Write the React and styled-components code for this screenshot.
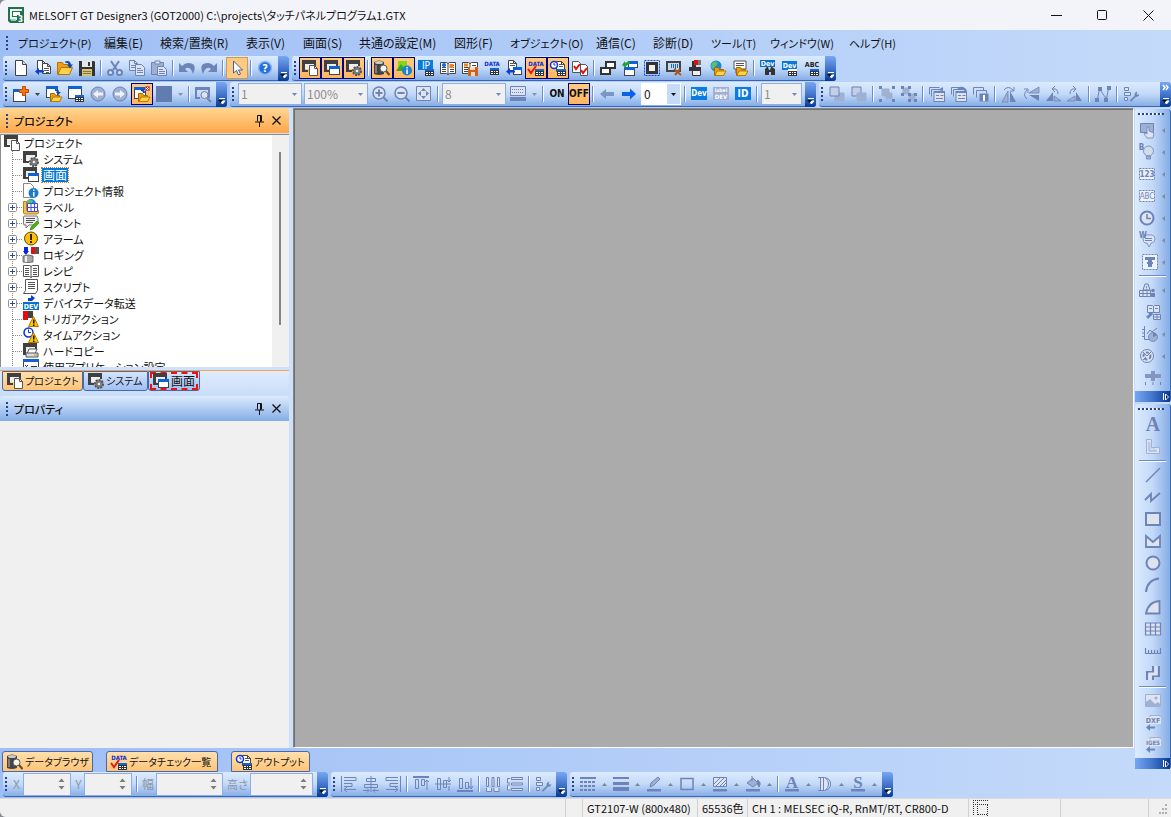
import React from 'react';
import styled, { createGlobalStyle, css } from 'styled-components';

const Global = createGlobalStyle`
  *, *::before, *::after { box-sizing: border-box; }
  html { background: #8a8a8a; }
  body { margin: 0; }
  body, button, input, select {
    font-family: "Noto Sans CJK JP", "Noto Sans", sans-serif;
    font-size: 12px;
    line-height: 16px;
    color: #111;
    font-feature-settings: "palt";
  }
  button { border: 0; padding: 0; background: none; }
`;

/* ---------- drawing helpers ---------- */

const D = '#6c84b7';
const M = '#9fb0d2';
const L = '#dde3ef';
const K = '#404040';

const T = ({ x = 8, y, s = 6, c = '#0b2bd0', w = 'bold', children }) => (
  <text x={x} y={y} fontSize={s} fontWeight={w} fill={c} textAnchor="middle" fontFamily="DejaVu Sans Condensed, sans-serif">{children}</text>
);
const Frame = () => (<><path d="M2 3h11v6H2z" fill="#eee" /><path d="M0 0h14v6h-2V4H3v6h3v2H0z" fill={K} /></>);
const Page = ({ x = 0, y = 0, c = '#444', f = '#fff' }) => (
  <path transform={`translate(${x} ${y})`} d="M.5.5h5l3 3v7h-8zM5.500.5v3h3" fill={f} stroke={c} />
);
const Lines = ({ d, c = '#555' }) => <path d={d} stroke={c} fill="none" />;
const Table = ({ x = 7, y = 9, h = '#1267d8', g = '#333' }) => (
  <g transform={`translate(${x} ${y})`}>
    <path d="M0 0h9v7H0z" fill={g} /><path d="M0 0h9v2H0z" fill={h} />
    <path d="M1 3h2v1H1zM4 3h1v1H4zM6 3h2v1H6zM1 5h2v1H1zM4 5h1v1H4zM6 5h2v1H6z" fill="#fff" />
  </g>
);
const Win = ({ x = 0, y = 0, w = 10, h = 8, c = '#1060d8', b = '#444' }) => (
  <g><rect x={x + 0.5} y={y + 0.5} width={w - 1} height={h - 1} fill="#fff" stroke={b} /><rect x={x} y={y} width={w} height="3" fill={c} /></g>
);
const Folder = ({ x = 4, y = 6 }) => (
  <g transform={`translate(${x} ${y})`}><path d="M.5 9.500V1.500h4l1 2h4v6z" fill="#e8a010" stroke="#a86a00" /><path d="M1 9.500l2-4.500h9l-2.500 4.500z" fill="#ffd34d" stroke="#b97b00" /></g>
);
const Gear = ({ x = 11, y = 11 }) => (
  <g transform={`translate(${x} ${y})`}><circle r="4" fill="#888" stroke="#555" strokeWidth="2" strokeDasharray="2 1" /><circle r="3" fill="#777" /><circle r="1.300" fill="#eee" /></g>
);
const Warn = ({ x = 5, y = 5 }) => (
  <g transform={`translate(${x} ${y})`}><path d="M5.500.5l5 10H.5z" fill="#ffc400" stroke="#b67a00" strokeLinejoin="round" /><path d="M5 3.500h1.500v4H5zM5 8.500h1.500V10H5z" fill="#111" /></g>
);
const Book = ({ c = '#444' }) => (
  <><path d="M.5 2.500h6l1.500 1 1.500-1h6v11h-6l-1.500 1-1.500-1h-6z" fill="#fff" stroke={c} /><path d="M8 3v12M2 5.500h4M2 7.500h4M2 9.500h4M2 11.500h4M10 5.500h4M10 7.500h4M10 9.500h4M10 11.500h4" stroke={c} /></>
);
const Globe = ({ x = 6, y = 6, r = 5.5 }) => (
  <g><circle cx={x} cy={y} r={r} fill="#1f86dc" /><path d={`M${x - 4} ${y - 3}q3-3 6 0l-2 3-3 3-2-2z`} fill="#56c271" /></g>
);
const ArrowL = ({ x = 0, y = 9, c = '#0a3fd8' }) => (
  <path transform={`translate(${x} ${y})`} d="M0 3.500L4 0v2.500h5v2H4V7z" fill={c} />
);
const Dash = ({ y = 2, h = 12 }) => <rect x=".5" y={y + 0.5} width="15" height={h - 1} fill="#eef2fa" stroke={D} strokeDasharray="2 1" />;
const Stack = () => (<><path d="M.5 8.500v-7h10M2.500 10.500v-7h10" fill="none" stroke={D} /><rect x="5" y="5.500" width="10.500" height="10" fill={L} stroke={D} /><path d="M5 6.500h10M7 9.500h3M7 12.500h7M11.500 9.500h3" stroke={D} /></>);
const Wrench = () => <path d="M7 14.500l5-5a2.500 2.500 0 0 1 2-3.500l-.5 2 1 1 1.500-.5a2.500 2.500 0 0 1-3 2L8 15.500z" fill={D} stroke={D} strokeWidth=".5" />;
const ListRows = () => <path d="M1.500 1.500h4v3h-4zM1.500 6.500h6v3h-6zM1.500 11.500h3v3h-3z" fill={L} stroke={D} />;
const Clock = ({ x, y, r, c }) => (<><circle cx={x} cy={y} r={r} fill="#fff" stroke={c} strokeWidth="1.500" /><path d={`M${x} ${y - r + 1.500}V${y}h${r - 2}`} stroke={c} fill="none" /></>);
const Log = () => (<><path d="M1 0h4v4H3L1 7zM0 4h6L3 8z" fill="#0828d8" /><path d="M8 0h4v7H8z" fill="#e01010" /><path d="M12 0h4v7h-4z" fill="#555" /></>);

const glyphs = {
  app: <><path d="M0 0h16v16H2l-2-2z" fill="#24714f" /><path d="M2 2h12v11H3l-1-1z" fill="#e6f5ee" /><path d="M4 4h10v6H4z" fill="#24714f" /><path d="M5 5h7v4H5z" fill="#fff" /><path d="M3 12h5v2H3z" fill="#9fcdb8" /><rect x="9" y="8" width="7" height="8" fill="#24714f" /><T x={12.500} y={15} s={8} c="#fff">3</T></>,
  newFile: <><path d="M2.500.5h7l4 4v11h-11z" fill="#fff" stroke={K} /><path d="M9.500.5v4h4" fill="#ddd" stroke={K} /></>,
  importFile: <><Page x={2} y={0} /><Page x={7} y={3} /><Lines d="M9 8.500h5M9 10.500h5M11 12.500h3" /><ArrowL x={0} y={8} /></>,
  openFile: <><path d="M.5 14.500v-12h5l1 2h6v3" fill="#eba21b" stroke="#b97300" /><path d="M1 14.500l3-7h11.500l-3 7z" fill="#ffd04a" stroke="#b97300" /><path d="M8 1.500q5-2 6 3h2l-3 4-3-4h2q-1-2-4-2z" fill="#1048b0" /></>,
  save: <><path d="M0 1h15l1 1v14H0z" fill="#333" /><path d="M3 1h10v6H3z" fill="#e6e6e6" /><path d="M9 2h2v4H9z" fill="#333" /><path d="M3 9h10v7H3z" fill="#d3c47a" /><path d="M4 11h8v1H4zM4 13h8v1H4z" fill="#847840" /></>,
  cut: <><path d="M4 1l6 9M12 1L6 10" stroke={D} strokeWidth="2" /><circle cx="3.500" cy="12.500" r="2.500" fill={L} stroke={D} strokeWidth="2" /><circle cx="12.500" cy="12.500" r="2.500" fill={L} stroke={D} strokeWidth="2" /></>,
  copy: <><Page x={0} y={0} c={D} f={L} /><Lines c={D} d="M2 5.500h4M2 7.500h4" /><g transform="translate(6 4)"><path d="M.5.5h6l3 3v8h-9z" fill={L} stroke={D} /><path d="M2 4.500h4M2 6.500h6M2 8.500h6" stroke={D} /></g></>,
  paste: <><path d="M.5 2.500h12v12H.5z" fill={M} stroke={D} /><path d="M4 1h5v3H4z" fill={L} stroke={D} /><path d="M6.500 6.500h6l3 3v6h-9z" fill={L} stroke={D} /><path d="M8 9.500h4M8 11.500h6M8 13.500h6" stroke={D} /></>,
  undo: <path d="M0 3v9h9L6 9q5-4 8 5 5-11-5-11-3 0-6 3z" fill={D} />,
  redo: <path d="M16 3v9H7l3-3Q5 5 2 14-3 3 7 3q3 0 6 3z" fill={D} />,
  cursor: <path d="M4.500 1v12l3-2.500 2 4.500 2-1-2-4h4z" fill="#fff" stroke="#4a5f99" />,
  help: <><circle cx="8" cy="8" r="6.500" fill="#2470dc" stroke="#8fb4ee" strokeWidth="1.500" /><T y={12} s={11} c="#fff">?</T></>,
  project: <><Frame /><g transform="translate(7 5)"><path d="M.5.5h5l3 3v7h-8z" fill="#fff" stroke="#555" /><path d="M5.500.5v3h3" fill="none" stroke="#555" /></g></>,
  screen: <><Frame /><Win x={5} y={6} w={11} h={9} /></>,
  system: <><Frame /><Gear /></>,
  dataBrowser: <><path d="M0 2q5-3 10 0v12q-5 2-10 0z" fill="#444" /><ellipse cx="5" cy="2.500" rx="4" ry="1.500" fill="#ccc" /><path d="M2 5v8" stroke="#bbb" /><circle cx="9.500" cy="8.500" r="3.500" fill="#f4f4f4" stroke="#555" /><path d="M12 11l3.500 4" stroke="#6b4a2a" strokeWidth="2" /></>,
  shapes: <><path d="M2 1h9v7H2z" fill="#83d61d" /><path d="M0 11l5-7 5 7z" fill="#3aa62a" /><circle cx="11" cy="10.500" r="5" fill="#1c82d0" /><path d="M10.300 7h1.500v1.500h-1.500zM10.300 9.500h1.500V14h-1.500z" fill="#fff" /></>,
  ip: <><path d="M0 0h15v10H0z" fill="#0a7bd8" /><T y={9} s={10} w="normal" c="#fff">IP</T><Table /></>,
  bookColor: <><Book /><circle cx="4" cy="5" r="2" fill="#1267e8" /><path d="M9.500 4h4v4h-4z" fill="#f08020" /></>,
  bookSave: <><Book /><path d="M2 3.500h4v3H2z" fill="#f08020" /><path d="M6 7h10v9H6z" fill="#d0601c" /><path d="M8 7h5v3H8zM9 12h4v4H9z" fill="#f7d9c0" /></>,
  data: <><T y={6}>DATA</T><Table x={6} y={8} /></>,
  dataCheck: <><T y={6}>DATA</T><path d="M0 9l3 4 5-7" stroke="#e01818" strokeWidth="2" fill="none" /><Table /></>,
  winImport: <><Page x={2} y={0} /><Lines d="M4 3.500h3M4 5.500h5" /><Win x={7} y={7} w={9} h={8} /><ArrowL x={0} y={8} /></>,
  output: <><Page x={6} y={1} /><Clock x={4} y={5} r={3.5} c="#0a35d8" /><path d="M9 4.500h4M9 6.500h4" stroke="#555" /><Table /></>,
  checkPages: <><path d="M.5 1.500h6l2 2v9h-8z" fill="#fff" stroke="#555" /><path d="M8.500 4.500h5l2 2v9h-7z" fill="#fff" stroke="#555" /><path d="M2 6l2 3 4-5M9 10l2 3 4-5" fill="none" stroke="#e01010" strokeWidth="2" /></>,
  cascade: <><path d="M6 2h9v6H6z" fill="#fff" stroke="#333" strokeWidth="2" /><path d="M1 8h9v6H1z" fill="#fff" stroke="#333" strokeWidth="2" /></>,
  winSwap: <><Win x={6} y={1} w={10} h={7} /><Win x={2} y={7} w={11} h={9} /><path d="M7 1L3 3v-2l-3 4 4 3V6q2-2 4-2z" fill="#24a32a" /></>,
  selection: <><rect x=".5" y=".5" width="15" height="15" fill="none" stroke="#1648d8" strokeDasharray="2 1" /><path d="M2 2h12v12H2z" fill="#333" /><path d="M5 5h6v6H5z" fill="#eee" /></>,
  touchPic: <><path d="M0 1h15v11H0z" fill="#444" /><path d="M2 3h11v7H2z" fill="#c8d9ee" /><path d="M5.500 4v4M7.500 4v4M9.500 4v5M11.500 4v4" stroke="#1267c8" /><path d="M8 9l7 6M14 9l-5 6" stroke="#a8571c" strokeWidth="2" /></>,
  printSet: <><path d="M4 1h4v8H4z" fill="#333" /><path d="M6 0h4v5H6z" fill="#e01010" /><path d="M10 0h3v5h-3z" fill="#777" /><path d="M1 7h12v4H1z" fill="#333" /><path d="M4.500 10.500h8v5h-8z" fill="#eee" stroke="#333" /></>,
  globeFolder: <><Globe x={6} y={6} /><Folder x={4} y={6} /></>,
  commentFolder: <><path d="M2 1h12v8H8l-4 4V9H2z" fill="#fff" stroke="#555" /><Lines d="M4 3.500h8M4 5.500h8" /><Folder x={4} y={6} /></>,
  devFind: <><path d="M0 0h15v7H0z" fill="#0a6cc8" /><T x={7.500} y={6} s={7} c="#fff">Dev</T><path d="M5 15V9l2-2h1l1 3h1l1-3h1l3 2v6h-4v-3h-2v3z" fill="#333" /></>,
  devTable: <><path d="M0 1h15v9H0z" fill="#0a78d8" /><T x={7.500} y={8} s={7} c="#fff">Dev</T><Table x={6} y={9} h="#fff" /></>,
  abcTable: <><T y={7} s={7} c="#222">ABC</T><Table x={6} y={9} /></>,

  newScreen: <><Win x={0} y={3} w={13} h={13} /><path d="M9.500.5h3v3h3v3h-3v3h-3v-3h-3v-3h3z" fill="#f07a10" stroke="#c04a00" /></>,
  openScreen: <><Win x={0} y={0} w={12} h={12} /><path d="M9 3q4 0 4 3h2l-3 3-2-3h1q0-1-2-1z" fill="#1048b0" /><Folder x={4} y={6} /></>,
  screenTable: <><Win x={0} y={0} w={14} h={13} /><Table /></>,
  prev: <><circle cx="8" cy="8" r="7" fill={M} stroke={D} /><path d="M3 8l5-4v2.500h5v3H8V12z" fill="#eef2fa" /></>,
  next: <><circle cx="8" cy="8" r="7" fill={M} stroke={D} /><path d="M13 8L8 4v2.500H3v3h5V12z" fill="#eef2fa" /></>,
  openX: <><Win x={0} y={1} w={12} h={12} /><Folder x={4} y={6} /><path d="M7 4q3 0 3 3" stroke="#1048b0" fill="none" strokeWidth="2" /><path d="M11.500.5h4v4h-4z" fill="#fff" stroke="#d06060" /><path d="M12 1l3 3M15 1l-3 3" stroke="#d02020" /></>,
  square: <path d="M0 0h16v16H0z" fill="#617cae" />,
  preview: <><path d="M0 1h15v11h-2V4H2v7h3v2H0z" fill={D} /><circle cx="9.500" cy="9" r="3.500" fill={L} stroke={D} /><path d="M12 12l4 4" stroke={D} strokeWidth="2" /></>,
  zoomIn: <><circle cx="7" cy="7" r="6" fill={L} stroke={D} strokeWidth="1.500" /><path d="M6 3.500h2V6h2.500v2H8v2.500H6V8H3.500V6H6z" fill={D} /><path d="M11.500 11.500l4 4" stroke={D} strokeWidth="2" /></>,
  zoomOut: <><circle cx="7" cy="7" r="6" fill={L} stroke={D} strokeWidth="1.500" /><path d="M3.500 6h7v2h-7z" fill={D} /><path d="M11.500 11.500l4 4" stroke={D} strokeWidth="2" /></>,
  fit: <><path d="M.5.5h14v14H.5z" fill={L} stroke={D} /><path d="M7.500 2L10 5H5zM7.500 13L10 10H5zM2 7.500L5 5v5zM13 7.500L10 5v5z" fill={D} /></>,
  grid: <><path d="M.5.5h15v9H.5z" fill={L} stroke={D} /><path d="M2 3.500h12M2 6.500h12" stroke={D} strokeDasharray="1 1" /><path d="M0 11h16v4H0z" fill={D} /></>,
  left: <path d="M1 8l6-5v3h8v4H7v3z" fill={D} opacity=".8" />,
  right: <path d="M15 8L9 2.500V6H1v4h8v3.500z" fill="#0b62ee" />,
  dev: <><path d="M0 1h16v13H0z" fill="#0a7be0" /><T y={10} s={8} c="#fff">Dev</T></>,
  labelDev: <><path d="M0 1h16v13H0z" fill={M} /><T y={6} s={5} c="#fff">label</T><T y={13} s={6} c="#fff">DEV</T></>,
  id: <><path d="M0 1h16v13H0z" fill="#0a7be0" /><T y={11} s={10} c="#fff">ID</T></>,
  front: <><path d="M6 7h9v8H6z" fill={M} stroke={M} /><path d="M1 1h9v9H1z" fill="#c2cfe6" stroke={D} /></>,
  back: <><path d="M1 1h9v9H1z" fill="#c2cfe6" stroke={D} /><path d="M6 7h9v8H6z" fill={M} stroke={M} /></>,
  group: <><path d="M3 3h7v7H3zM7 7h6v6H7z" fill={M} stroke={M} /><path d="M0 0h3v3H0zM13 0h3v3h-3zM0 13h3v3H0zM13 13h3v3h-3z" fill={D} /></>,
  ungroup: <><path d="M2 2h6v6H2zM8 8h6v6H8z" fill={M} stroke={M} /><path d="M0 0h3v3H0zM7 0h3v3H7zM0 7h3v3H0zM7 7h3v3H7zM13 7h3v3h-3zM7 13h3v3H7zM13 13h3v3h-3z" fill={D} /></>,
  layer1: <><Stack /><path d="M9 4l5-3v4z" fill={D} /></>,
  layer2: <><Stack /><path d="M7 3q5-3 8 2" fill="none" stroke={D} strokeWidth="2" /></>,
  layer3: <><path d="M.5 8.500v-7h10v3M3.500 11.500v-7h10v3" fill="none" stroke={D} /><rect x="6.500" y="7.500" width="9" height="8" fill={D} /><path d="M10 9h2v6h-2z" fill="#fff" /></>,
  flipH: <><path d="M7 5v11H1z" fill={M} stroke={D} strokeWidth=".8" /><path d="M9 5v11h6z" fill={D} /><path d="M3 4q4-5 9 0M13 1v4H9" fill="none" stroke={D} /></>,
  flipV: <><path d="M6 7h10V1z" fill={M} stroke={D} strokeWidth=".8" /><path d="M6 9h10v6z" fill={D} /><path d="M4 13q-5-4 0-9M1 3h4v4" fill="none" stroke={D} /></>,
  rotL: <><path d="M1 15h7V6z" fill={D} /><path d="M9 15h7L9 10z" fill={M} stroke={D} strokeWidth=".8" /><path d="M13 8q0-6-5-5M10 0L7 3l3 3" fill="none" stroke={D} /></>,
  rotR: <><path d="M15 15H9V6z" fill={D} /><path d="M8 15H0l8-5z" fill={M} stroke={D} strokeWidth=".8" /><path d="M3 8q0-6 5-5M6 0l3 3-3 3" fill="none" stroke={D} /></>,
  nodes: <><path d="M2.500 13L4.500 3l7 10 2-11" fill="none" stroke={D} /><path d="M3 1h4v4H3zM12 0h4v4h-4zM0 12h4v4H0zM9 12h4v4H9z" fill={D} /></>,
  attrs: <><ListRows /><Wrench /></>,

  touch: <><path d="M1.500 1.500h13v9h-13z" fill={M} stroke={D} /><path d="M8 5v7l-2-1-1 1 3 4h6l1-5-5-2V5z" fill={L} stroke={D} strokeWidth=".8" /></>,
  lamp: <><T x={2.500} y={6} s={8} c={D}>B</T><circle cx="9.500" cy="7" r="5" fill="#d3daea" stroke={D} strokeWidth=".8" /><path d="M7.500 12h4v3h-4z" fill={M} stroke={D} strokeWidth=".8" /></>,
  num: <><Dash /><T y={11} s={8} c={D}>123</T></>,
  abc: <><Dash /><T y={11} s={8} c={D} w="normal">ABC</T></>,
  clock: <><circle cx="8" cy="8" r="6.500" fill={L} stroke={D} strokeWidth="2" /><path d="M8 4v4.500h4" fill="none" stroke={D} strokeWidth="1.500" /></>,
  wcomment: <><path d="M5 3h8q3 1 3 4t-3 4h-1l-2 4-2-4H6q-2-1-2-4z" fill={L} stroke={D} strokeWidth=".8" /><path d="M6 6.500h7M6 8.500h7" stroke={D} /><T x={4} y={6} s={8} c={D}>W</T></>,
  parts: <><Dash y={0} h={16} /><path d="M3 3h10v3h-3v2h1v2h-1v3H6v-3H5V8h1V6H3z" fill={D} /></>,
  alarm: <><path d="M4 8l2-6h3l2 6z" fill={L} stroke={D} /><T x={7.500} y={8} s={6} c={D}>!</T><path d="M.5 8.500h11v6H.5zM.5 11.500h11M4 8.500v6M8 8.500v6" fill={L} stroke={D} /><circle cx="14" cy="8.500" r="1.800" fill={D} /><path d="M12 11h4v4h-4z" fill={D} /></>,
  recipe: <><path d="M2.500 1.500h5l1 1 1-1h5v7h-12z" fill={L} stroke={D} /><path d="M8.500 2v7M4 4.500h3M10 4.500h3" stroke={D} /><path d="M4 9q0 3-3 3l2 3 3-3q2-1 2-4z" fill={D} /><path d="M8.500 10.500h7v5h-7zM8.500 13h7M12 10v5" fill={L} stroke={D} /></>,
  graph: <><path d="M2.500 0v13.500h5M0 3.500h3M0 7h3M0 10.500h3M5 8l3-4 2 2 5-4" fill="none" stroke={D} /><circle cx="11" cy="11" r="4.500" fill={M} stroke={D} strokeWidth=".8" /><path d="M11 11V6.500a4.500 4.500 0 0 1 4 3z" fill={D} /></>,
  meter: <><circle cx="8" cy="8" r="6.500" fill={L} stroke={D} /><circle cx="8" cy="8" r="3.500" fill="none" stroke={D} strokeWidth="2" strokeDasharray="3 2" /><path d="M4 4l4 4 4-4M4 12l3-3" stroke={D} fill="none" /></>,
  slider: <><path d="M6 1h4v3h6v4h-6v3H6V8H0V4h6z" fill="#8296c1" /><path d="M.5 12v3M8 12v3M15.500 12v3" stroke={D} /></>,
  letterA: <text x="8" y="14" textAnchor="middle" fontFamily="Liberation Serif, serif" fontWeight="bold" fontSize="20" fill={D}>A</text>,
  letterL: <path d="M1.500.5h5v8h8v6h-13zM4 3v9h8" fill={L} stroke={M} />,
  line: <path d="M1 15L15 1" stroke={D} strokeWidth="1.500" />,
  poly: <path d="M0 11l6-6v7l9-8" fill="none" stroke={D} strokeWidth="1.800" />,
  rect: <path d="M1 2h14v12H1z" fill={L} stroke={D} strokeWidth="2" />,
  polygon: <path d="M1 3l7 6 7-6v11H1z" fill={L} stroke={D} strokeWidth="1.800" />,
  circle: <circle cx="8" cy="8" r="6.500" fill={L} stroke={D} strokeWidth="2" />,
  arc: <path d="M1 15Q2 3 14 1.500" fill="none" stroke={D} strokeWidth="2" />,
  sector: <path d="M1 14.500Q3 3 14.500 2v12.500z" fill={L} stroke={D} strokeWidth="1.800" />,
  table: <path d="M.5 2h15v12H.5zM.5 6h15M.5 10h15M5.500 2v12M10.500 2v12" fill={L} stroke={D} strokeWidth="1.200" />,
  scale: <path d="M.5 5v5.500h15V5M3.500 7v3M6.500 7v3M9.500 7v3M12.500 7v3" fill="none" stroke={D} strokeWidth="1.200" />,
  pipe: <><path d="M2 15V7h6V1M8 15v-4h6V1" fill="none" stroke={D} strokeWidth="2" /><path d="M5 15V9h6V1" fill="none" stroke={L} strokeWidth="3" /></>,
  image: <><path d="M.5 1.500h15v12H.5z" fill={L} stroke={M} /><path d="M1 13V9l4-3 5 5 3-2 2 2v2z" fill={M} /><circle cx="11" cy="5" r="1.500" fill={M} /></>,
  dxf: <><path d="M5 .5h10v5H5z" fill={L} stroke={M} /><path d="M0 2h16v7H0z" fill={L} /><T y={8} s={7} c={D}>DXF</T><ArrowL x={1} y={9} c={D} /></>,
  iges: <><path d="M5 .5h10v5H5z" fill={L} stroke={M} /><path d="M0 2h16v7H0z" fill={L} /><T y={8} s={6} c={D}>IGES</T><ArrowL x={1} y={9} c={D} /></>,

  info: <><path d="M.5.5h7l3 3v11H.5z" fill="#fff" stroke="#888" /><circle cx="10.500" cy="10" r="5" fill="#1c7cc8" /><path d="M10 6.500h1.500V8H10zM10 9h1.500v4.500H10z" fill="#fff" /></>,
  label: <><Globe x={8} y={5} r={5} /><path d="M.5 2.500h3v9h12v2.500l-1 1h-13l-1-1z" fill="#f0c050" stroke="#b88010" /><path d="M4.500 4.500h10v8h-10zM4.500 8.500h10M8 4.500v8M11.500 4.500v8" fill="#fff" stroke="#4048e0" /></>,
  comment: <><path d="M1 1h13l1 2v5l-2 2H6l-3 3v-3H1L.5 8V2z" fill="#eee" stroke="#777" /><Lines d="M3 3.500h9M3 5.500h9M3 7.500h7" /><path d="M8 12l6-6 2 2-6 6-3 1z" fill="#43b515" stroke="#217800" strokeWidth=".6" /></>,
  alarmTree: <><circle cx="8" cy="7.500" r="6.500" fill="#ffc000" stroke="#5a4300" /><path d="M7 3h2v6H7zM7 10h2v2H7z" fill="#222" /></>,
  logging: <><Log /><path d="M0 9q5-2 10 0v6q-5 1-10 0z" fill="#aaa" stroke="#555" strokeWidth=".8" /><path d="M3 9v6" stroke="#eee" strokeWidth="2" /></>,
  book: <Book c="#555" />,
  script: <><path d="M2.500.5h12v11l-2 3H.5l2-3z" fill="#fff" stroke="#555" /><Lines d="M5 3.500h7M5 5.500h7M5 7.500h7M5 9.500h7" /></>,
  devTransfer: <><path d="M5 6V3h3L8 0l4 3-3 3z" fill="#0840c8" /><path d="M0 7h16v8H0z" fill="#0a6fd0" /><T y={13.500} s={7} c="#fff">DEV</T></>,
  trigger: <><path d="M0 0h5v9H0z" fill="#e01010" /><path d="M5 0h5v7H5z" fill="#444" /><Warn /></>,
  time: <><Clock x={5.5} y={5.5} r={4.5} c="#0a35d8" /><Warn /></>,
  hardcopy: <><Frame /><path d="M6 6h8l-2 5H4z" fill="#fff" stroke="#555" /><path d="M3 10h12v4H3z" fill="#ddd" stroke="#555" /><path d="M11 12h3" stroke="#c8a000" /></>,
  appSet: <><Win x={0} y={0} w={16} h={15} /><path d="M2 6l3 3M5 6L2 9M8 7.500h6M8 11.500h6" stroke="#333" /></>,

  alignL: <path d="M.5 0v16M3 1.500h12v3H3M3 7.500h8v3H3M3 13.500h12M6 11l-3 2.500 3 2.500" fill="none" stroke={D} />,
  alignC: <path d="M8 0v16M3.500 2.500h9v3h-9zM1.500 8.500h13v3h-13zM0 14.500h6M16 14.500h-6M4 12.500l2 2-2 2M12 12.500l-2 2 2 2" fill="none" stroke={D} />,
  alignR: <path d="M15.500 0v16M13 1.500H1v3h12M13 7.500H5v3h8M13 13.500H1M10 11l3 2.500-3 2.500" fill="none" stroke={D} />,
  alignT: <><path d="M0 0h16v2H0z" fill={D} /><path d="M2.500 3.500v9h3v-9zM8.500 3.500v6h3v-6zM14 4v10M12 6l2-2 2 2" fill="none" stroke={D} /></>,
  alignM: <path d="M0 8h16M2.500 2.500v11h3v-11zM8.500 4.500v7h3v-7zM14 1v5M14 15v-5M12 4l2 2 2-2" fill="none" stroke={D} />,
  alignB: <><path d="M0 14h16v2H0z" fill={D} /><path d="M2.500 12.500v-10h3v10zM8.500 12.500v-6h3v6zM14 2v11M12 10l2 3 2-3" fill="none" stroke={D} /></>,
  distH: <path d="M1.500 1.500h2v9h-2zM7 1.500h2v9H7zM12.500 1.500h2v9h-2zM1.500 12v3.500h5V12M9 12v3.500h5V12" fill={L} stroke={D} />,
  distV: <path d="M4.500 1.500h11v2h-11zM4.500 7h11v2h-11zM4.500 12.500h11v2h-11zM3 2.500H.5V7H3M3 9H.5v5H3" fill={L} stroke={D} />,
  lineType: <><path d="M0 1h16v2H0z" fill={D} /><path d="M0 6h16M0 10h16M0 14h16" stroke={D} strokeWidth="2" strokeDasharray="3 1" /></>,
  lineWidth: <path d="M0 1h16v2H0zM0 6h16v3H0zM0 11h16v4H0z" fill={D} />,
  lineColor: <><path d="M4 11l1-4 7-6 2 2-6 6z" fill={M} stroke={D} /><path d="M1 13h14v2.500H1z" fill={D} /></>,
  box: <path d="M2 2.500h12v11H2z" fill="none" stroke={D} strokeWidth="1.500" />,
  hatch: <><path d="M1.500 1.500h13v9h-13z" fill={L} stroke={D} /><path d="M2 8l6-6M4 10l8-8M8 10l6-6M11 10l3-3" stroke={D} /><path d="M1 13h14v2.500H1z" fill={D} /></>,
  fill: <><path d="M2 7l6-5 5 5-5 4z" fill={M} stroke={D} /><path d="M12 4q5 2 2 7l-2-4M7 5V0" fill={D} stroke={D} /><path d="M1 13h14v2.500H1z" fill={D} /></>,
  textColor: <><text x="8" y="12" textAnchor="middle" fontFamily="Liberation Serif, serif" fontWeight="bold" fontSize="17" fill={D}>A</text><path d="M1 13h14v2.500H1z" fill={D} /></>,
  textD: <path d="M3.500 1.500h4q6 1 6 6.500t-6 6.500h-4zM6.500 2v12M1 1.500h4M1 14.500h4M8.500 2q3 2 3 6t-3 6" fill={L} stroke={D} />,
  textS: <><text x="8" y="12" textAnchor="middle" fontFamily="Liberation Serif, serif" fontWeight="bold" fontSize="17" fill={D}>S</text><path d="M1 13h14v2.500H1z" fill={D} /></>,
};

const Svg = styled.svg`display: block; flex: none; overflow: visible;`;
const Icon = ({ name }) => <Svg width="16" height="16" viewBox="0 0 16 16" aria-hidden="true">{glyphs[name]}</Svg>;

/* ---------- window ---------- */

const Window = styled.div`
  display: flex;
  flex-direction: column;
  min-height: 100vh;
  overflow: hidden;
  border-radius: 6px 0 0 6px;
  background: linear-gradient(90deg, #9ebef5, #c4dafa);
`;
const TitleBar = styled.header`
  display: flex;
  align-items: center;
  height: 30px;
  padding-left: 8px;
  gap: 5px;
  background: #f3f4fa;
`;
const Title = styled.h1`
  flex: 1;
  margin: 0;
  font-size: 11px;
  font-weight: 400;
  white-space: nowrap;
`;
const WindowButtons = styled.div`display: flex;`;
const WindowButton = styled.button`
  display: grid;
  place-items: center;
  width: 46px;
  height: 30px;
`;

const Grip = styled.i`
  flex: none;
  width: 2px;
  height: 14px;
  margin: 0 3px 0 2px;
  background: repeating-linear-gradient(#27418a 0 2px, transparent 2px 4px);
`;
const MenuBar = styled.nav`
  display: flex;
  align-items: center;
  height: 26px;
  padding-left: 4px;
`;
const MenuItem = styled.button`
  width: ${(p) => p.$w}px;
  padding-left: 7px;
  text-align: left;
  white-space: nowrap;
  font-size: ${(p) => (p.$kana ? 11 : 12)}px;
`;

/* ---------- toolbars ---------- */

const ToolRow = styled.div`
  display: flex;
  align-items: flex-start;
  gap: 3px;
  height: 26px;
  padding-left: 3px;
`;
const Bar = styled.div`
  display: flex;
  align-items: center;
  height: 25px;
  flex: ${(p) => (p.$grow ? '1' : 'none')};
  border-bottom: 1px solid #3b66ac;
  border-radius: 3px;
  background: linear-gradient(#dcebfe, #c3d9f8 50%, #86ade6);
`;
const ToolButton = styled.button`
  display: grid;
  place-items: center;
  flex: none;
  width: 22px;
  height: 22px;
  ${(p) => p.$on && css`border: 1px solid #000080; background: linear-gradient(#ffcb83, #ffb561);`}
  ${(p) => p.$hot && css`border: 1px solid #c89c58; background: #fdca80;`}
`;
const WordButton = styled(ToolButton)`
  font: bold 10px/16px "DejaVu Sans Condensed", sans-serif;
`;
const Sep = styled.i`
  flex: none;
  width: 2px;
  height: 16px;
  margin: 0 2px;
  border-left: 1px solid #6a8ccb;
  border-right: 1px solid #fff;
`;
const ArrowButton = styled.button`
  display: grid;
  place-items: center;
  flex: none;
  width: ${(p) => (p.$narrow ? 6 : 11)}px;
  height: 22px;
`;
const More = styled.button`
  display: flex;
  flex-direction: column;
  align-items: center;
  justify-content: ${(p) => (p.$double ? 'space-between' : 'flex-end')};
  width: 11px;
  height: 25px;
  margin-left: ${(p) => (p.$double ? 'auto' : '2px')};
  padding: 3px 0;
  border-radius: 0 3px 3px 0;
  background: linear-gradient(#78a7f2, #3d6fc6 55%, #053995);
`;
const Down = ({ c = '#333' }) => <Svg width="5" height="3" viewBox="0 0 5 3"><path d="M0 0h5L2.500 3z" fill={c} /></Svg>;
const Up = ({ c = '#7d8494' }) => <Svg width="5" height="3" viewBox="0 0 5 3"><path d="M0 3h5L2.500 0z" fill={c} /></Svg>;
const MoreMark = () => <Svg width="7" height="6" viewBox="0 0 7 6"><path d="M1 .5h6M2 3h5L4.500 6z" stroke="#fff" fill="#fff" /><path d="M0 2h5L2.500 5z" fill="#111" /></Svg>;
const Overflow = ({ double: dbl }) => (
  <More $double={dbl} aria-label="More buttons">
    {dbl && <Svg width="8" height="5" viewBox="0 0 8 5"><path d="M1 0l2 2.500L1 5M4 0l2 2.500L4 5" fill="none" stroke="#fff" strokeWidth="1.500" /></Svg>}
    <MoreMark />
  </More>
);

const Combo = styled.label`
  position: relative;
  flex: none;
  width: ${(p) => p.$w}px;
  margin: 0 1px;
`;
const Select = styled.select`
  display: block;
  width: 100%;
  height: 22px;
  padding: 0 2px;
  appearance: none;
  border: 1px solid ${(p) => (p.disabled ? '#8daee4' : '#fff')};
  border-radius: 0;
  background: ${(p) => (p.disabled ? '#f0f0f0' : 'linear-gradient(90deg, #fff calc(100% - 13px), #c4daf8 0)')};
  color: ${(p) => (p.disabled ? '#8d8d8d' : '#222')};
  opacity: 1;
`;
const ComboMark = styled.span`
  position: absolute;
  right: 5px;
  top: 10px;
  pointer-events: none;
`;
const ComboBox = ({ w, value, name, enabled }) => (
  <Combo $w={w}>
    <Select disabled={!enabled} aria-label={name} defaultValue={value}><option>{value}</option></Select>
    <ComboMark><Down c={enabled ? '#111' : '#6c8cc4'} /></ComboMark>
  </Combo>
);

/* "|" separator, "+name" pressed, "*name" highlighted, "v" "d" "^" arrows */
const Tools = ({ items }) => items.split(' ').map((t, i) => {
  if (t === '|') return <Sep key={i} />;
  if (t === 'v') return <ArrowButton key={i} aria-label="Options"><Down c="#444" /></ArrowButton>;
  if (t === 'd') return <ArrowButton key={i} aria-label="Options"><Down c="#8a93a8" /></ArrowButton>;
  if (t === '^') return <ArrowButton key={i} aria-label="Options"><Up /></ArrowButton>;
  const on = t[0] === '+';
  const hot = t[0] === '*';
  const name = on || hot ? t.slice(1) : t;
  return <ToolButton key={i} $on={on} $hot={hot} aria-label={name}><Icon name={name} /></ToolButton>;
});

/* ---------- work area ---------- */

const Body = styled.div`display: flex; flex: 1;`;
const MainColumn = styled.div`display: flex; flex-direction: column; flex: 1; min-width: 0;`;
const Work = styled.main`display: flex; flex: 1; background: #cfe0fb;`;
const Side = styled.aside`
  display: flex;
  flex-direction: column;
  flex: none;
  width: 289px;
  margin-right: 4px;
`;
const PanelHead = styled.div`
  display: flex;
  align-items: center;
  height: 25px;
  padding: 0 4px;
  border-radius: 4px 4px 0 0;
  background: ${(p) => (p.$active ? 'linear-gradient(#ffd692, #ffa648)' : 'linear-gradient(#dcebfe, #86ade6)')};
`;
const PanelTitle = styled.h2`
  flex: 1;
  margin: 0;
  padding-left: 3px;
  font-size: 11px;
  font-weight: 500;
  line-height: 16px;
`;
const PanelButton = styled.button`
  display: grid;
  place-items: center;
  width: 17px;
  height: 16px;
`;
const TreeBox = styled.div`
  display: flex;
  height: 233px;
  overflow: hidden;
  border: 1px solid #8c8c8c;
  border-width: 1px 0 0 1px;
  margin-top: 1px;
  background: #fff;
`;
const TreeList = styled.ul`
  flex: 1;
  margin: 0;
  padding: 0;
  list-style: none;
`;
const TreeRow = styled.li`
  display: flex;
  align-items: center;
  height: 16px;
  padding-left: ${(p) => (p.$root ? 3 : 7)}px;
  font-size: 11px;
  white-space: nowrap;
`;
const TreeText = styled.span`
  margin-left: 3px;
  padding: 0 1px;
  line-height: 14px;
  ${(p) => p.$sel && css`outline: 1px dotted #e07a20; background: #0078d7; color: #fff; font-size: 12px;`}
`;
const Toggle = styled.button`display: block; width: 15px; height: 16px;`;
const Branch = ({ open }) => (
  <Svg width="15" height="16" viewBox="0 0 15 16">
    <path d="M4.500 0v16M5 8.500h10" stroke="#888" strokeDasharray="1 1" />
    {open && <><rect x=".5" y="4.500" width="8" height="8" rx="1" fill="#fff" stroke="#919191" /><path d="M2 8.500h5M4.500 6v5" stroke="#2a4aa0" /></>}
  </Svg>
);
const Scroll = styled.div`
  width: 17px;
  padding: 17px 8px 0 7px;
  background: #f0f0f0;
  &::before { content: ""; display: block; height: 173px; background: #858585; }
`;
const TabStrip = styled.div`
  display: flex;
  align-items: flex-start;
  height: 26px;
  margin-top: 3px;
  padding-left: 2px;
  border-top: 1px solid #f0a850;
  background: linear-gradient(#e0ecfd, #c8dcf8);
`;
const Tab = styled.button`
  display: flex;
  align-items: center;
  gap: 2px;
  height: ${(p) => (p.$top ? 21 : 20)}px;
  width: ${(p) => p.$w}px;
  padding-left: 4px;
  white-space: nowrap;
  border: 1px solid #4a68a8;
  border-radius: ${(p) => (p.$top ? '3px 3px 0 0' : '0 0 3px 3px')};
  background: ${(p) => (p.$on ? 'linear-gradient(#ffe0ae, #ffc477)' : 'linear-gradient(#d4e4fc, #a0c0f2)')};
  font-size: 10px;
`;
const Marked = styled.span`
  display: flex;
  align-items: center;
  gap: 2px;
  height: 18px;
  margin-left: -3px;
  border: 2px dashed #f01010;
  padding: 0 1px;
  font-size: 12px;
`;
const PropBody = styled.div`flex: 1; background: #f0f0f0;`;
const Canvas = styled.section`
  flex: 1;
  border: 1px solid #858585;
  border-right-color: #fff;
  border-bottom-color: #fff;
  box-shadow: inset 1px 1px #6e6e6e;
  background: #ababab;
`;
const BottomTabs = styled.div`
  display: flex;
  align-items: flex-end;
  gap: 13px;
  height: 24px;
  padding-left: 2px;
`;

/* ---------- right dock ---------- */

const Dock = styled.div`
  display: flex;
  flex-direction: column;
  gap: 2px;
  width: 37px;
  padding: 1px 0 0 1px;
`;
const VBar = styled.div`
  display: flex;
  flex-direction: column;
  border-right: 1px solid #3b66ac;
  border-radius: 3px;
  background: linear-gradient(90deg, #dcebfe, #c3d9f8 50%, #86ade6);
`;
const VGrip = styled.i`
  height: 2px;
  margin: 4px 6px 4px 3px;
  background: repeating-linear-gradient(90deg, #27418a 0 2px, #fff 2px 3px, transparent 3px 4px);
`;
const VItem = styled.div`display: flex; justify-content: center; height: 22px;`;
const VSep = styled.i`
  height: 2px;
  margin: 2px 4px;
  border-top: 1px solid #6a8ccb;
  border-bottom: 1px solid #fff;
`;
const VMore = styled.button`
  display: flex;
  justify-content: flex-end;
  align-items: center;
  height: 11px;
  margin-top: 2px;
  padding-right: 1px;
  background: linear-gradient(90deg, #78a7f2, #3d6fc6 55%, #053995);
`;
const VTools = ({ items }) => items.split(' ').map((t, i) => {
  if (t === '|') return <VSep key={i} />;
  const [name, arrow] = t.split(':');
  return (
    <VItem key={i}>
      <ToolButton aria-label={name}><Icon name={name} /></ToolButton>
      {arrow && <ArrowButton $narrow={arrow === 'n'} aria-label="Options"><Svg width="3" height="5" viewBox="0 0 3 5"><path d="M3 0v5L0 2.500z" fill="#7f8ca5" /></Svg></ArrowButton>}
    </VItem>
  );
});
const VMark = () => <Svg width="7" height="8" viewBox="0 0 7 8"><path d="M1.500 0v7M3.500 1l3 3-3 3z" stroke="#fff" fill="#111" /></Svg>;

/* ---------- coordinate fields ---------- */

const FieldLabel = styled.label`
  width: ${(p) => p.$w}px;
  text-align: center;
  color: #8b95a8;
  white-space: nowrap;
  font-size: ${(p) => (p.$small ? 11 : 12)}px;
`;
const Field = styled.span`
  display: flex;
  align-items: center;
  justify-content: space-between;
  width: ${(p) => p.$w}px;
  height: 23px;
  margin-right: 2px;
  padding-right: 5px;
  border: 1px solid #8daee4;
  background: #f0f0f0;
`;
const FieldInput = styled.input`flex: 1; min-width: 0; height: 20px; border: 0; background: none;`;
const Spin = () => <Svg width="7" height="12" viewBox="0 0 7 12"><path d="M.5 4h6l-3-3.500zM.5 8h6l-3 3.500z" fill="#7c7c7c" /></Svg>;
const Coord = ({ id, label, lw, w, small }) => (
  <>
    <FieldLabel htmlFor={id} $w={lw} $small={small}>{label}</FieldLabel>
    <Field $w={w}><FieldInput id={id} disabled /><Spin /></Field>
  </>
);

const StatusBar = styled.footer`
  display: flex;
  justify-content: flex-end;
  height: 19px;
  background: #f0f0f0;
  border-top: 1px solid #dcdcdc;
`;
const Cell = styled.span`
  width: ${(p) => p.$w}px;
  padding: 1px 0 0 4px;
  border-left: 1px solid #d0d0d0;
  white-space: nowrap;
  font-size: 11px;
`;

const menus = [
  ['プロジェクト(P)', 86, 'kana'], ['編集(E)', 56], ['検索/置換(R)', 86], ['表示(V)', 57], ['画面(S)', 56],
  ['共通の設定(M)', 95], ['図形(F)', 56], ['オブジェクト(O)', 86, 'kana'], ['通信(C)', 57], ['診断(D)', 58],
  ['ツール(T)', 59, 'kana'], ['ウィンドウ(W)', 79, 'kana'], ['ヘルプ(H)', 60, 'kana'],
];
const tree = [
  ['system', 'システム'], ['screen', '画面', 'sel'], ['info', 'プロジェクト情報'], ['label', 'ラベル', 'open'],
  ['comment', 'コメント', 'open'], ['alarmTree', 'アラーム', 'open'], ['logging', 'ロギング', 'open'],
  ['book', 'レシピ', 'open'], ['script', 'スクリプト', 'open'], ['devTransfer', 'デバイスデータ転送', 'open'],
  ['trigger', 'トリガアクション'], ['time', 'タイムアクション'], ['hardcopy', 'ハードコピー'], ['appSet', '使用アプリケーション設定'],
];

const Head = ({ title, active }) => (
  <PanelHead $active={active}>
    <Grip /><PanelTitle>{title}</PanelTitle>
    <PanelButton aria-label="Pin"><Svg width="9" height="12" viewBox="0 0 9 12"><path d="M2.500 6.500v-6h4v6M5.500 0v7M0 7h9M4.500 7v5" stroke="#111" fill="none" /></Svg></PanelButton>
    <PanelButton aria-label="Close"><Svg width="9" height="9" viewBox="0 0 9 9"><path d="M.5.5l8 8M8.500.5l-8 8" stroke="#111" strokeWidth="1.300" /></Svg></PanelButton>
  </PanelHead>
);

export default function App() {
  return (
    <Window>
      <Global />
      <TitleBar>
        <Icon name="app" />
        <Title>MELSOFT GT Designer3 (GOT2000) C:\projects\タッチパネルプログラム1.GTX</Title>
        <WindowButtons>
          <WindowButton aria-label="Minimize"><Svg width="11" height="11"><path d="M0 5.500h11" stroke="#111" /></Svg></WindowButton>
          <WindowButton aria-label="Maximize"><Svg width="11" height="11"><rect x=".5" y=".5" width="9" height="9" rx="1" fill="none" stroke="#111" /></Svg></WindowButton>
          <WindowButton aria-label="Close window"><Svg width="11" height="11"><path d="M.5.5l10 10M10.500.5l-10 10" stroke="#111" /></Svg></WindowButton>
        </WindowButtons>
      </TitleBar>
      <MenuBar>
        <Grip />
        {menus.map(([m, w, kana]) => <MenuItem key={m} $w={w} $kana={kana}>{m}</MenuItem>)}
      </MenuBar>
      <ToolRow>
        <Bar>
          <Grip /><Tools items="newFile importFile openFile save | cut copy paste | undo redo | *cursor | help" /><Overflow />
        </Bar>
        <Bar>
          <Grip /><Tools items="+project +screen +system | +dataBrowser +shapes ip bookColor bookSave data winImport +dataCheck +output checkPages | cascade winSwap selection touchPic printSet globeFolder commentFolder | devFind devTable abcTable" /><Overflow />
        </Bar>
      </ToolRow>
      <ToolRow>
        <Bar>
          <Grip /><Tools items="newScreen v openScreen screenTable prev next +openX square d | preview" /><Overflow />
        </Bar>
        <Bar>
          <Grip />
          <ComboBox w={64} value="1" name="Screen number" />
          <ComboBox w={64} value="100%" name="Zoom" />
          <Tools items="zoomIn zoomOut fit |" />
          <ComboBox w={64} value="8" name="Grid spacing" />
          <Tools items="grid d |" />
          <WordButton>ON</WordButton><WordButton $on>OFF</WordButton>
          <Tools items="| left right" />
          <ComboBox w={40} value="0" name="State" enabled />
          <Tools items="| dev labelDev id |" />
          <ComboBox w={41} value="1" name="Language column" />
          <Overflow />
        </Bar>
        <Bar $grow>
          <Grip /><Tools items="front back | group ungroup | layer1 layer2 layer3 | flipH flipV rotL rotR | nodes | attrs" /><Overflow double />
        </Bar>
      </ToolRow>
      <Body>
        <MainColumn>
          <Work>
            <Side>
              <Head title="プロジェクト" active />
              <TreeBox>
                <TreeList>
                  <TreeRow $root><Icon name="project" /><TreeText>プロジェクト</TreeText></TreeRow>
                  {tree.map(([icon, text, kind]) => (
                    <TreeRow key={text}>
                      {kind === 'open' ? <Toggle aria-label={text}><Branch open /></Toggle> : <Branch />}
                      <Icon name={icon} />
                      <TreeText $sel={kind === 'sel'}>{text}</TreeText>
                    </TreeRow>
                  ))}
                </TreeList>
                <Scroll />
              </TreeBox>
              <TabStrip>
                <Tab $w={81} $on><Icon name="project" />プロジェクト</Tab>
                <Tab $w={65}><Icon name="system" />システム</Tab>
                <Tab $w={52}><Marked><Icon name="screen" />画面</Marked></Tab>
              </TabStrip>
              <Head title="プロパティ" />
              <PropBody />
            </Side>
            <Canvas />
          </Work>
          <BottomTabs>
            <Tab $top $on $w={91}><Icon name="dataBrowser" />データブラウザ</Tab>
            <Tab $top $on $w={112}><Icon name="dataCheck" />データチェック一覧</Tab>
            <Tab $top $on $w={79}><Icon name="output" />アウトプット</Tab>
          </BottomTabs>
          <ToolRow>
            <Bar>
              <Grip />
              <Coord id="x" label="X" lw={13} w={48} />
              <Coord id="y" label="Y" lw={11} w={48} />
              <Sep />
              <Coord id="w" label="幅" lw={16} w={67} />
              <Coord id="h" label="高さ" lw={25} w={63} small />
              <Overflow />
            </Bar>
            <Bar>
              <Grip /><Tools items="alignL alignC alignR | alignT alignM alignB | distH distV | attrs" /><Overflow />
            </Bar>
            <Bar>
              <Grip /><Tools items="lineType ^ lineWidth ^ lineColor ^ box ^ hatch ^ fill ^ | textColor ^ textD ^ textS ^" /><Overflow />
            </Bar>
          </ToolRow>
        </MainColumn>
        <Dock>
          <VBar>
            <VGrip />
            <VTools items="touch:w lamp:w num:w abc:w clock:w wcomment:w parts:n | alarm:w recipe graph:n meter:w slider" />
            <VMore aria-label="More objects"><VMark /></VMore>
          </VBar>
          <VBar>
            <VGrip />
            <VTools items="letterA letterL | line poly rect polygon circle arc sector table scale pipe | image dxf iges" />
            <VMore aria-label="More figures"><VMark /></VMore>
          </VBar>
        </Dock>
      </Body>
      <StatusBar>
        <Cell $w={17} />
        <Cell $w={115}>GT2107-W (800x480)</Cell>
        <Cell $w={50}>65536色</Cell>
        <Cell $w={221}>CH 1 : MELSEC iQ-R, RnMT/RT, CR800-D</Cell>
        <Cell $w={92}><Svg width="16" height="16" viewBox="0 0 16 16"><path d="M0 .5h15M.5 0v16M4.500 2v14M0 4.500h16M14.500 5v11M5 14.500h10" stroke="#333" strokeDasharray="1 1" /></Svg></Cell>
        <Cell $w={88} />
        <Cell $w={23}><Svg width="16" height="16" viewBox="0 0 16 16"><path d="M12 4h2v2h-2zM9 8h2v2H9zM12 8h2v2h-2zM6 12h2v2H6zM9 12h2v2H9zM12 12h2v2h-2z" fill="#b0b0b0" /></Svg></Cell>
      </StatusBar>
    </Window>
  );
}
